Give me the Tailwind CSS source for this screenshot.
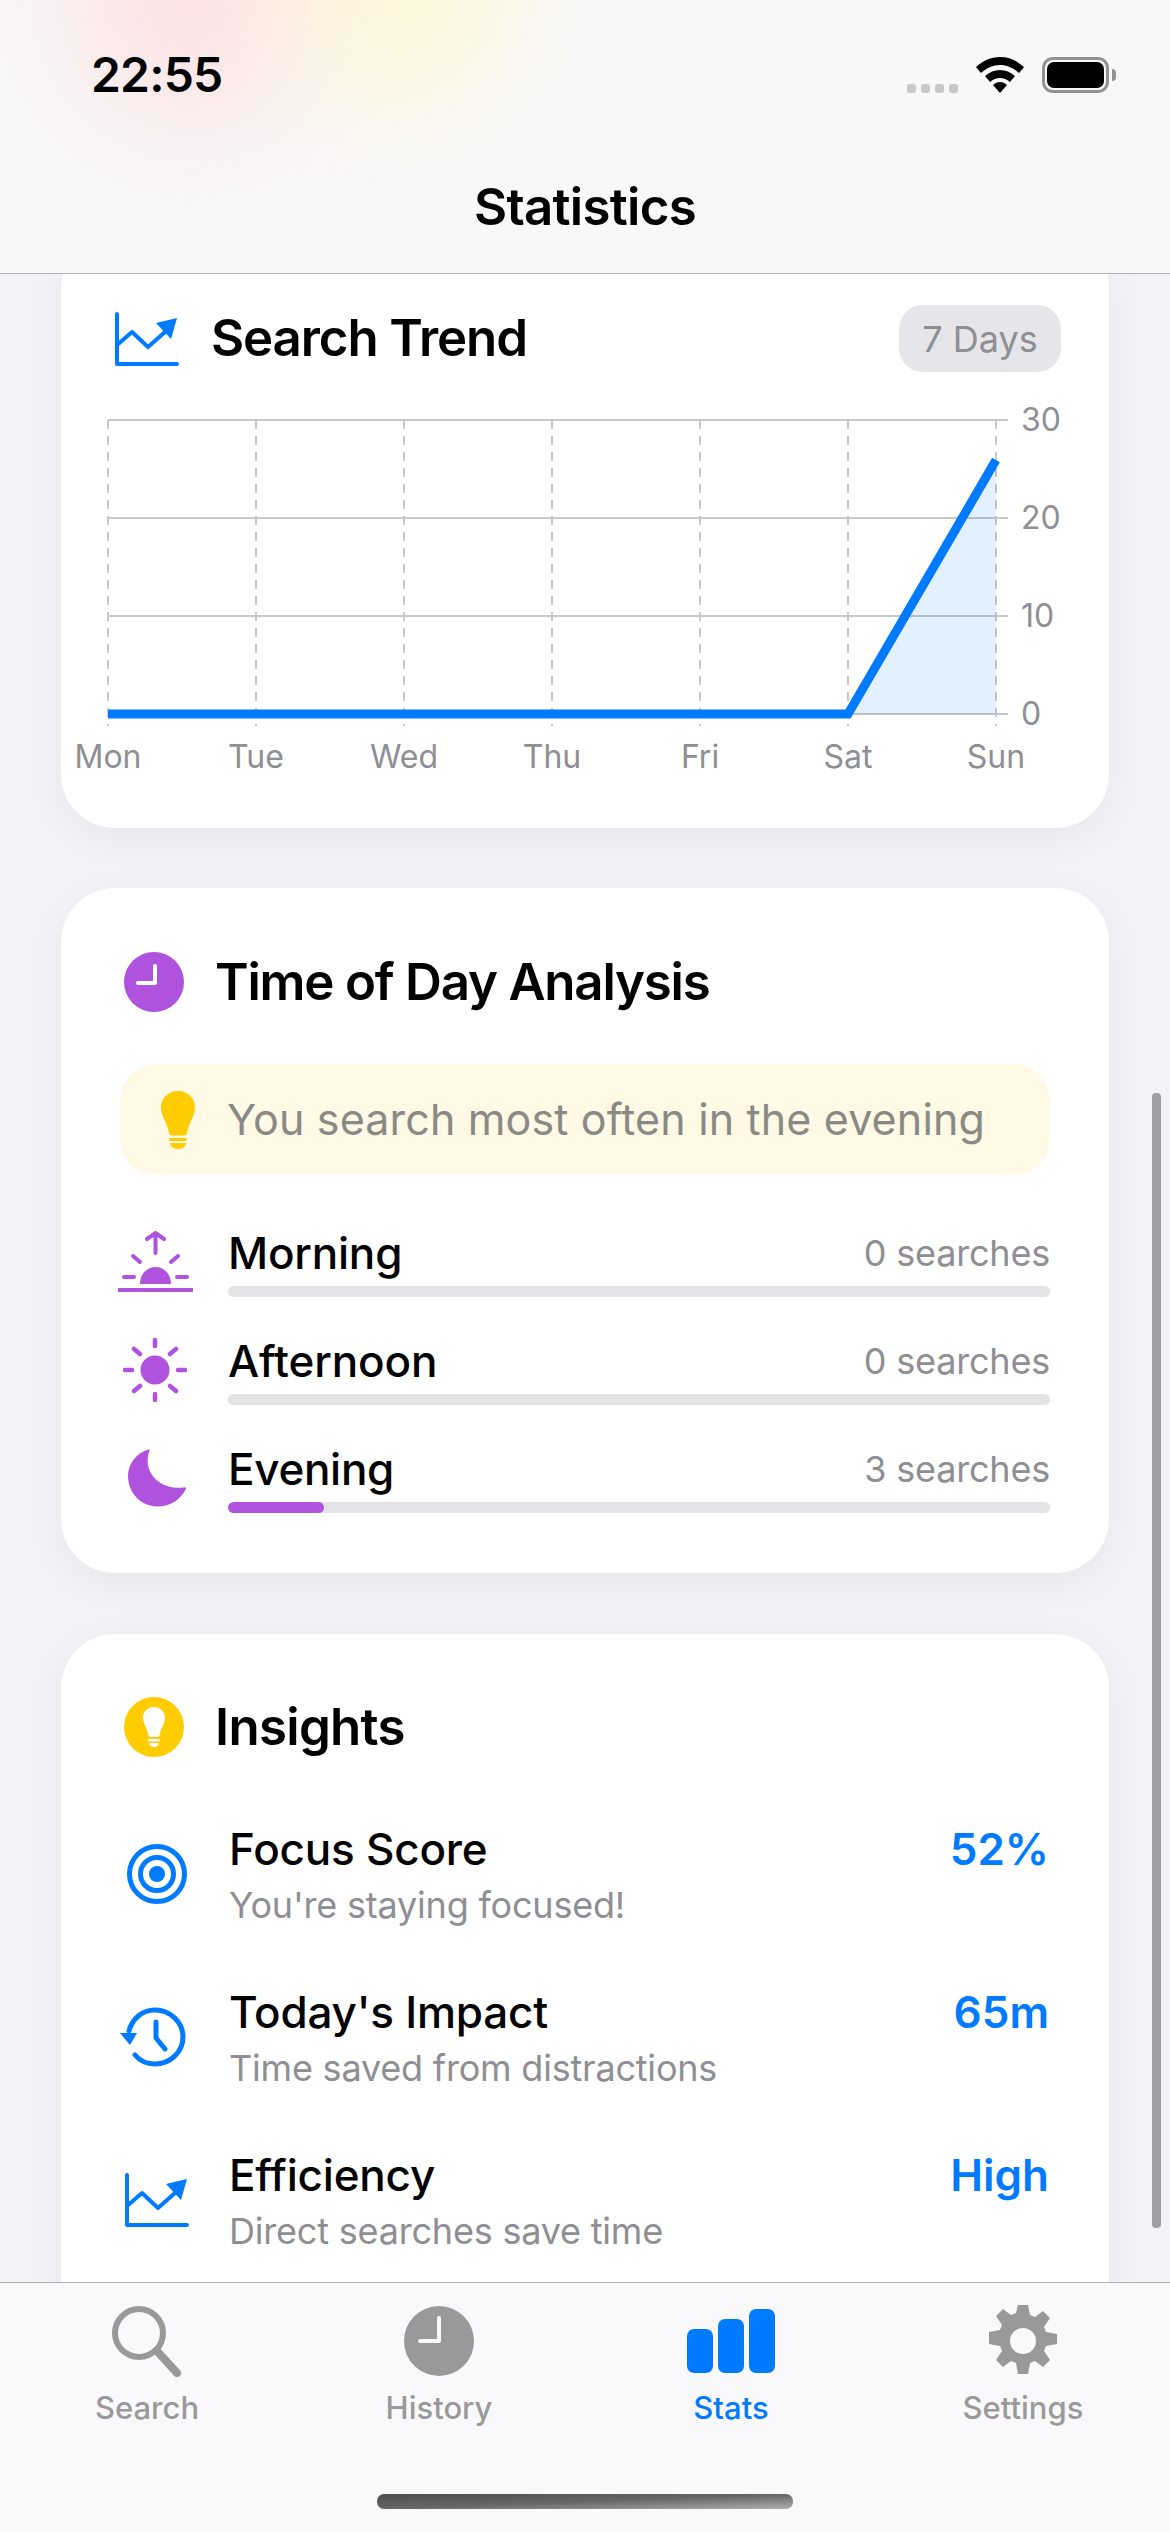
<!DOCTYPE html>
<html lang="en">
<head>
    <meta charset="UTF-8">
    <meta name="viewport" content="width=device-width, initial-scale=1.0">
    <title>Statistics</title>
    <script src="https://cdn.jsdelivr.net/npm/@tailwindcss/browser@4"></script>
</head>
<body class="bg-[#f2f2f7] text-black font-['Inter',sans-serif]">
<div class="relative flex flex-col w-[1170px] h-[2532px] overflow-hidden">

    <!-- nav bar -->
    <header class="relative shrink-0 h-[274px] bg-[#f8f8f9] border-b border-[#b2b2b2] overflow-hidden">
        <div class="absolute left-[70px] top-[-170px] w-[240px] h-[300px] rounded-full bg-[#ffd2d0] blur-[70px] opacity-60"></div>
        <div class="absolute left-[290px] top-[-190px] w-[230px] h-[300px] rounded-full bg-[#fff6cf] blur-[60px] opacity-75"></div>
        <div class="relative flex items-center justify-between h-[150px] pl-[91px] pr-[54px]">
            <span class="text-[48px] font-semibold tracking-[-0.8px]">22:55</span>
            <div class="flex items-start gap-[18px]">
                <div class="flex gap-[5px] mt-[27px]">
                    <span class="w-[9px] h-[9px] rounded-[3px] bg-[#c8c8c8]"></span>
                    <span class="w-[9px] h-[9px] rounded-[3px] bg-[#c8c8c8]"></span>
                    <span class="w-[9px] h-[9px] rounded-[3px] bg-[#c8c8c8]"></span>
                    <span class="w-[9px] h-[9px] rounded-[3px] bg-[#c8c8c8]"></span>
                </div>
                <svg class="w-[48px] h-[36px]" viewBox="0 0 48 36" fill="#000">
                    <path d="M24 0C15 0 7 3.500 0 10l5 6C10.500 11 17 8 24 8s13.500 3 19 8l5-6C41 3.500 33 0 24 0z"/>
                    <path d="M24 13c-5.500 0-10.500 2-15 6l5 6c3-2.500 6.300-4 10-4s7 1.500 10 4l5-6c-4.500-4-9.500-6-15-6z"/>
                    <path d="M24 25c-2.500 0-5 1-7 3l7 8 7-8c-2-2-4.500-3-7-3z"/>
                </svg>
                <div class="flex items-center gap-[3px]">
                    <div class="w-[67px] h-[36px] p-[2px] rounded-[11px] border-[3px] border-[#929292]">
                        <div class="w-full h-full rounded-[7px] bg-black"></div>
                    </div>
                    <div class="w-[4px] h-[12px] rounded-r-[4px] bg-[#929292]"></div>
                </div>
            </div>
        </div>
        <h1 class="relative mt-[29px] text-center text-[51px] leading-[56px] font-semibold tracking-[-0.7px]">Statistics</h1>
    </header>

    <!-- scroll content -->
    <main class="flex-1 min-h-0 overflow-hidden px-[61px]">

        <!-- search trend -->
        <section class="h-[594px] mt-[-40px] mb-[60px] bg-white rounded-[54px] shadow-[0_10px_40px_rgba(0,0,0,0.05)] pt-[71px] pl-[54px] pr-[48px]">
            <div class="flex items-center justify-between h-[67px]">
                <div class="flex items-center gap-[32px]">
                    <svg class="w-[64px] h-[54px]" viewBox="0 0 64 54" fill="none" stroke="#007aff" stroke-width="4" stroke-linecap="round" stroke-linejoin="round">
                        <path d="M2 2v50h60"/>
                        <path d="M2 33l15-13 16 15 17-15"/>
                        <path d="M41 11l21-5-6 21z" fill="#007aff" stroke="none"/>
                    </svg>
                    <h2 class="text-[51px] font-semibold tracking-[-1.1px]">Search Trend</h2>
                </div>
                <span class="flex items-center justify-center w-[162px] h-[67px] rounded-[24px] bg-[#e5e5ea] text-[36px] text-[#8e8e93]">7 Days</span>
            </div>
            <!-- chart -->
            <svg class="block ml-[-63px] mt-[28px] font-['Inter',sans-serif]" width="1040" height="380" viewBox="52 400 1040 380">
                <g stroke="#c7c7cc" stroke-width="2" stroke-dasharray="9 7" fill="none">
                    <path d="M108 420V726"/><path d="M256 420V726"/><path d="M404 420V726"/><path d="M552 420V726"/>
                    <path d="M700 420V726"/><path d="M848 420V726"/><path d="M996 420V726"/>
                </g>
                <g stroke="#c7c7cc" stroke-width="2" fill="none">
                    <path d="M108 420H1008"/><path d="M108 518H1008"/><path d="M108 616H1008"/><path d="M108 714H1008"/>
                </g>
                <path d="M848 714L996 460V714z" fill="#007aff" fill-opacity="0.11"/>
                <path d="M108 714H848L996 460" fill="none" stroke="#007aff" stroke-width="9"/>
                <g fill="#8e8e93" font-size="32">
                    <text x="1021" y="431">30</text><text x="1021" y="529">20</text>
                    <text x="1021" y="627">10</text><text x="1021" y="725">0</text>
                </g>
                <g fill="#8e8e93" font-size="32" text-anchor="middle">
                    <text x="108" y="768">Mon</text><text x="256" y="768">Tue</text><text x="404" y="768">Wed</text>
                    <text x="552" y="768">Thu</text><text x="700" y="768">Fri</text><text x="848" y="768">Sat</text><text x="996" y="768">Sun</text>
                </g>
            </svg>
        </section>

        <!-- time of day -->
        <section class="h-[685px] mb-[61px] bg-white rounded-[54px] shadow-[0_10px_40px_rgba(0,0,0,0.05)] pt-[64px] px-[59px]">
            <div class="flex items-center gap-[31px] h-[60px] pl-[4px]">
                <div class="w-[60px] h-[60px] rounded-full bg-[#af52de] flex items-center justify-center">
                    <svg class="w-[60px] h-[60px]" viewBox="0 0 60 60" fill="none" stroke="#fff" stroke-width="4" stroke-linecap="round" stroke-linejoin="round"><path d="M31 14v17H14"/></svg>
                </div>
                <h2 class="text-[51px] font-semibold tracking-[-1.2px]">Time of Day Analysis</h2>
            </div>
            <div class="flex items-center h-[111px] mt-[52px] rounded-[36px] bg-[#fff9e6] pl-[41px] gap-[32px]">
                <svg class="w-[34px] h-[58px]" viewBox="0 0 34 58" fill="#ffcc00">
                    <path d="M17 0C7.500 0 0 7 0 16c0 9 6 15 8 26 .3 1.500 1 2.500 3 2.500h12c2 0 2.700-1 3-2.500 2-11 8-17 8-26 0-9-7.500-16-17-16z"/>
                    <rect x="8" y="47" width="18" height="3" rx="1.500"/>
                    <path d="M9 52h16c0 3-3 6-8 6s-8-3-8-6z"/>
                </svg>
                <span class="text-[43px] text-[#8a8a84] tracking-[0.15px]">You search most often in the evening</span>
            </div>
            <div class="mt-[46px] flex flex-col gap-[26px]">
                <div class="flex items-center h-[82px]">
                    <svg class="w-[75px] h-[62px] ml-[-2px] mr-[35px]" viewBox="0 0 75 62" fill="#af52de" stroke-linecap="round">
                        <g stroke="#af52de" stroke-width="4" fill="none">
                            <path d="M37.500 22V2M29 8l8.500-6L46 8"/>
                            <path d="M15 25l7 6M60 25l-7 6"/><path d="M6 46h10M59 46h10"/><path d="M1 59h73"/>
                        </g>
                        <path d="M22 53c0-10 7-17 15.500-17S53 43 53 53z"/>
                    </svg>
                    <div class="flex-1">
                        <div class="flex items-center justify-between h-[52px]">
                            <span class="text-[44px] font-medium tracking-[-0.2px]">Morning</span>
                            <span class="text-[36px] text-[#8e8e93] tracking-[-0.2px]">0 searches</span>
                        </div>
                        <div class="h-[11px] mt-[7px] rounded-full bg-[#e3e3e5]"></div>
                    </div>
                </div>
                <div class="flex items-center h-[82px]">
                    <svg class="w-[64px] h-[64px] ml-[3px] mr-[41px]" viewBox="0 0 64 64" fill="#af52de" stroke="#af52de" stroke-linecap="round">
                        <circle cx="32" cy="32" r="14.500" stroke="none"/>
                        <g stroke-width="4.500" fill="none"><path d="M32 2v6M32 56v6M2 32h7M55 32h7M11 11l6 5M53 11l-6 5M11 53l6-5M53 53l-6-5"/></g>
                    </svg>
                    <div class="flex-1">
                        <div class="flex items-center justify-between h-[52px]">
                            <span class="text-[44px] font-medium tracking-[-0.1px]">Afternoon</span>
                            <span class="text-[36px] text-[#8e8e93] tracking-[-0.2px]">0 searches</span>
                        </div>
                        <div class="h-[11px] mt-[7px] rounded-full bg-[#e3e3e5]"></div>
                    </div>
                </div>
                <div class="flex items-center h-[82px]">
                    <svg class="w-[58px] h-[58px] ml-[8px] mr-[42px]" viewBox="0 0 59 58" fill="#af52de">
                        <path d="M21 0C9 3.500 0 14 0 27c0 17 13 31 30 31 13 0 24-7 29-18 .5-1-.5-1.500-1.500-1.500-2 .4-4 .5-6 .5C33 39 20 26 20 12c0-4 .5-7.500 2-11 .3-.8 0-1.300-1-1z"/>
                    </svg>
                    <div class="flex-1">
                        <div class="flex items-center justify-between h-[52px]">
                            <span class="text-[44px] font-medium tracking-[-0.3px]">Evening</span>
                            <span class="text-[36px] text-[#8e8e93] tracking-[-0.2px]">3 searches</span>
                        </div>
                        <div class="h-[11px] mt-[7px] rounded-full bg-[#e3e3e5] overflow-hidden">
                            <div class="h-full rounded-full bg-[#af52de]" style="width: 11.7%"></div>
                        </div>
                    </div>
                </div>
            </div>
        </section>

        <!-- insights -->
        <section class="h-[800px] bg-white rounded-[54px] shadow-[0_10px_40px_rgba(0,0,0,0.05)] pt-[63px] pl-[59px] pr-[60px]">
            <div class="flex items-center gap-[31px] h-[60px] pl-[4px]">
                <div class="w-[60px] h-[60px] rounded-full bg-[#ffcc00] flex items-center justify-center">
                    <svg class="w-[22px] h-[40px]" viewBox="0 0 22 40" fill="#fff">
                        <path d="M11 0C5 0 0 4.500 0 10.500c0 6 4 10 5.500 18 .2 1 .7 1.500 2 1.500h7c1.300 0 1.800-.5 2-1.500 1.500-8 5.500-12 5.500-18C22 4.500 17 0 11 0z"/>
                        <rect x="5" y="32" width="12" height="2.500" rx="1.200"/>
                        <path d="M6 36h10c0 2-2 4-5 4s-5-2-5-4z"/>
                    </svg>
                </div>
                <h2 class="text-[51px] font-semibold tracking-[-0.7px]">Insights</h2>
            </div>
            <div class="mt-[57px] flex flex-col gap-[43px]">
                <div class="flex items-center h-[120px]">
                    <svg class="w-[60px] h-[60px] ml-[7px] mr-[42px]" viewBox="0 0 60 60" fill="none" stroke="#007aff" stroke-width="5">
                        <circle cx="30" cy="30" r="27.500"/><circle cx="30" cy="30" r="16.500"/><circle cx="30" cy="30" r="8" fill="#007aff" stroke="none"/>
                    </svg>
                    <div class="flex-1">
                        <div class="flex items-center justify-between h-[60px]">
                            <span class="text-[44px] font-medium tracking-[-0.2px]">Focus Score</span>
                            <span class="text-[44px] font-semibold text-[#007aff]">52%</span>
                        </div>
                        <p class="text-[36px] leading-[48px] mt-[2px] text-[#8e8e93] tracking-[-0.2px]">You're staying focused!</p>
                    </div>
                </div>
                <div class="flex items-center h-[120px]">
                    <svg class="w-[66px] h-[60px] ml-[0px] mr-[43px]" viewBox="0 0 66 60" fill="none" stroke="#007aff" stroke-width="5" stroke-linecap="round" stroke-linejoin="round">
                        <path d="M9 24C12 12 22 3 35 3c15 0 28 12 28 27S50 57 35 57c-8 0-15-3-20-9"/>
                        <path d="M36 15v16l9 11"/>
                        <path d="M0 26h17l-7 12z" fill="#007aff" stroke="none"/>
                    </svg>
                    <div class="flex-1">
                        <div class="flex items-center justify-between h-[60px]">
                            <span class="text-[44px] font-medium tracking-[-0.2px]">Today's Impact</span>
                            <span class="text-[44px] font-semibold text-[#007aff]">65m</span>
                        </div>
                        <p class="text-[36px] leading-[48px] mt-[2px] text-[#8e8e93] tracking-[-0.2px]">Time saved from distractions</p>
                    </div>
                </div>
                <div class="flex items-center h-[120px]">
                    <svg class="w-[64px] h-[54px] ml-[5px] mr-[40px]" viewBox="0 0 64 54" fill="none" stroke="#007aff" stroke-width="4" stroke-linecap="round" stroke-linejoin="round">
                        <path d="M2 2v50h60"/>
                        <path d="M2 33l15-13 16 15 17-15"/>
                        <path d="M41 11l21-5-6 21z" fill="#007aff" stroke="none"/>
                    </svg>
                    <div class="flex-1">
                        <div class="flex items-center justify-between h-[60px]">
                            <span class="text-[44px] font-medium tracking-[-0.2px]">Efficiency</span>
                            <span class="text-[44px] font-semibold text-[#007aff]">High</span>
                        </div>
                        <p class="text-[36px] leading-[48px] mt-[2px] text-[#8e8e93] tracking-[-0.2px]">Direct searches save time</p>
                    </div>
                </div>
            </div>
        </section>
    </main>

    <!-- tab bar -->
    <nav class="relative shrink-0 h-[250px] bg-[#f9f9fb] border-t border-[#b2b2b2]">
        <div class="grid grid-cols-4 px-[1px] pt-[22px]">
            <div class="flex flex-col items-center">
                <svg class="w-[72px] h-[72px]" viewBox="0 0 72 72" fill="none" stroke="#999" stroke-linecap="round">
                    <circle cx="28" cy="28" r="24" stroke-width="6"/>
                    <path d="M46 46l20 22" stroke-width="8"/>
                </svg>
                <span class="mt-[8px] text-[31px] font-medium text-[#999]">Search</span>
            </div>
            <div class="flex flex-col items-center">
                <svg class="w-[72px] h-[72px]" viewBox="0 0 72 72">
                    <circle cx="36" cy="36" r="35" fill="#999"/>
                    <path d="M36 13v23H17" fill="none" stroke="#f9f9fb" stroke-width="4" stroke-linecap="round" stroke-linejoin="round"/>
                </svg>
                <span class="mt-[8px] text-[31px] font-medium text-[#999]">History</span>
            </div>
            <div class="flex flex-col items-center">
                <svg class="w-[88px] h-[72px]" viewBox="0 0 88 72" fill="#007aff">
                    <rect x="0" y="24" width="26" height="44" rx="7"/>
                    <rect x="31" y="14" width="26" height="54" rx="7"/>
                    <rect x="62" y="4" width="26" height="64" rx="7"/>
                </svg>
                <span class="mt-[8px] text-[31px] font-medium text-[#007aff]">Stats</span>
            </div>
            <div class="flex flex-col items-center">
                <svg class="w-[72px] h-[72px]" viewBox="0 0 72 72" fill="#999" fill-rule="evenodd">
                    <path d="M31 0h10l2 10 5 2 8-6 7 7-6 9 2 5 11 2v10l-11 2-2 5 6 9-7 7-8-6-5 2-2 11H31l-2-11-5-2-8 6-7-7 6-9-2-5-11-2V27l11-2 2-5-6-9 7-7 8 6 5-2z M36 23a13 13 0 1 0 0 26a13 13 0 1 0 0-26z"/>
                </svg>
                <span class="mt-[8px] text-[31px] font-medium text-[#999]">Settings</span>
            </div>
        </div>
        <div class="absolute left-[377px] top-[211px] w-[416px] h-[15px] rounded-[7px] bg-linear-to-br from-[#4d4d4d] via-[#666666] to-[#b0b0b0]"></div>
    </nav>

    <!-- scroll indicator -->
    <div class="absolute left-[1152px] top-[1093px] w-[9px] h-[1135px] rounded-[4px] bg-[#9e9ea3]"></div>
</div>
</body>
</html>
